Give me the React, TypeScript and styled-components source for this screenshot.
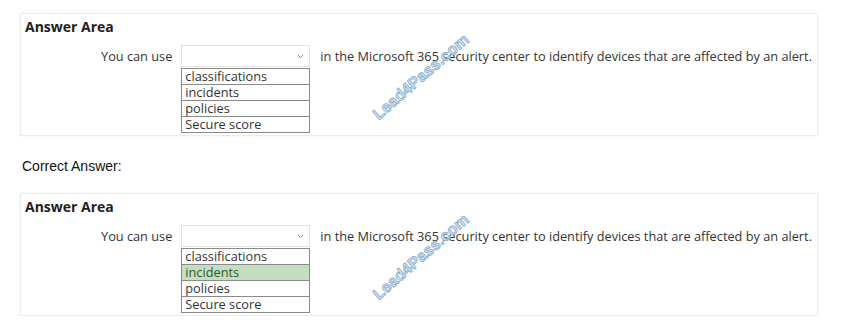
import styled, { createGlobalStyle } from "styled-components";

const GlobalStyle = createGlobalStyle`
  html, body {
    margin: 0;
    padding: 0;
    background: #fff;
  }
`;

const Page = styled.div`
  padding: 13px 0 0 20px;
  width: 798px;
`;

const Panel = styled.div`
  position: relative;
  box-sizing: border-box;
  height: 123px;
  border: 1px solid #ececec;
  box-shadow: 0 0 2px #f0f0f0;
  padding: 4px 0 0 4px;
  font-family: "Open Sans", "Noto Sans", sans-serif;
  color: #333;
`;

const Title = styled.div`
  font-weight: 700;
  font-size: 14px;
  line-height: 18px;
  color: #1e1e1e;
`;

const Row = styled.div`
  display: flex;
  align-items: flex-start;
  margin: 9px 0 0 76px;
  font-size: 12.75px;
`;

const Label = styled.span`
  line-height: 22px;
  margin-right: 9px;
`;

const Picker = styled.div`
  display: flex;
  flex-direction: column;
  width: 129px;
`;

const Select = styled.div`
  box-sizing: border-box;
  height: 22px;
  border: 1px solid #e2e2e2;
  display: flex;
  align-items: center;
  justify-content: flex-end;
  padding-right: 5px;
`;

const Options = styled.div`
  margin-top: 1px;
  width: 127px;
  border: 1px solid #8a8a8a;
`;

const Option = styled.div<{ $picked?: boolean }>`
  height: 15px;
  line-height: 15px;
  padding-left: 3px;
  font-size: 12.75px;
  background: ${(p) => (p.$picked ? "#c4dfc0" : "#fff")};
  color: ${(p) => (p.$picked ? "#2f5a2f" : "#333")};
  & + & {
    border-top: 1px solid #8a8a8a;
  }
`;

const Sentence = styled.span`
  line-height: 22px;
  margin-left: 10px;
  white-space: nowrap;
`;

const Watermark = styled.div`
  position: absolute;
  left: 400px;
  top: 63px;
  transform: translate(-50%, -50%) rotate(-41deg);
  font-family: "Liberation Sans", Arial, sans-serif;
  font-weight: 700;
  font-size: 16px;
  color: #cfe1f1;
  -webkit-text-stroke: 0.7px #7ea7cb;
  white-space: nowrap;
  pointer-events: none;
`;

const Caption = styled.div`
  font-family: "Liberation Sans", Arial, sans-serif;
  font-size: 14px;
  color: #111;
  line-height: 18px;
  margin: 21px 0 18px 2px;
`;

const Chevron = () => (
  <svg width="7" height="5" viewBox="0 0 7 5">
    <polyline points="1,1 3.5,3.5 6,1" fill="none" stroke="#888" strokeWidth="1" />
  </svg>
);

const choices = ["classifications", "incidents", "policies", "Secure score"];

const AnswerArea = ({ picked }: { picked?: string }) => (
  <Panel>
    <Title>Answer Area</Title>
    <Row>
      <Label>You can use</Label>
      <Picker>
        <Select>
          <Chevron />
        </Select>
        <Options>
          {choices.map((c) => (
            <Option key={c} $picked={c === picked}>
              {c}
            </Option>
          ))}
        </Options>
      </Picker>
      <Sentence>
        in the Microsoft 365 security center to identify devices that are affected by an alert.
      </Sentence>
    </Row>
    <Watermark>Lead4Pass.com</Watermark>
  </Panel>
);

export default function App() {
  return (
    <>
      <GlobalStyle />
      <Page>
        <AnswerArea />
        <Caption>Correct Answer:</Caption>
        <AnswerArea picked="incidents" />
      </Page>
    </>
  );
}
